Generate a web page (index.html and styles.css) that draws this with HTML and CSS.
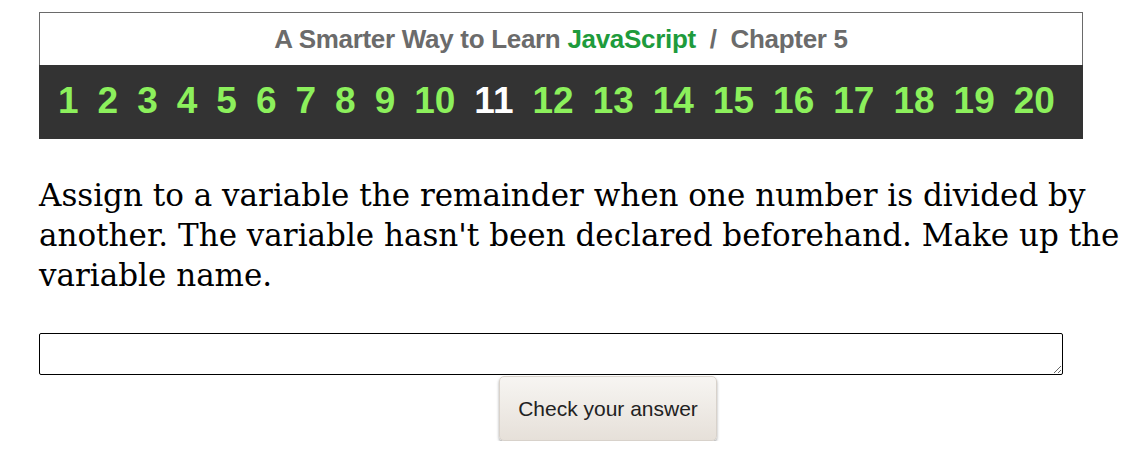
FILE: index.html
```html
<!DOCTYPE html>
<html>
<head>
<meta charset="utf-8">
<link rel="stylesheet" href="styles.css">
</head>
<body>
<div class="page">
  <div class="banner">
    <div class="title"><span>A Smarter Way to Learn <span class="js">JavaScript</span>&nbsp; / &nbsp;Chapter 5</span></div>
    <div class="nums">
      <span>1</span><span>2</span><span>3</span><span>4</span><span>5</span><span>6</span><span>7</span><span>8</span><span>9</span><span>10</span><span class="cur">11</span><span>12</span><span>13</span><span>14</span><span>15</span><span>16</span><span>17</span><span>18</span><span>19</span><span>20</span>
    </div>
  </div>
  <p class="prompt">Assign to a variable the remainder when one number is divided by another. The variable hasn't been declared beforehand. Make up the variable name.</p>
  <textarea class="answer"></textarea>
  <button class="check">Check your answer</button>
</div>
</body>
</html>
```
FILE: styles.css
```css
html, body {
  margin: 0;
  padding: 0;
  background: #fff;
}
.page {
  padding: 12px 6px 0 39px;
  display: flex;
  flex-direction: column;
  align-items: flex-start;
}
.banner {
  width: 1044px;
  display: flex;
  flex-direction: column;
}
.title {
  height: 51px;
  border: 1px solid #6a6a6a;
  border-bottom: none;
  background: #fff;
  display: flex;
  align-items: center;
  justify-content: center;
  font-family: "Liberation Sans", Arial, sans-serif;
  font-weight: bold;
  font-size: 26px;
  color: #6b6b6b;
  letter-spacing: -0.3px;
  padding-top: 1px;
}
.title .js {
  color: #1e9b3c;
}
.nums {
  height: 72px;
  background: #333333;
  display: flex;
  justify-content: space-between;
  align-items: center;
  padding: 0 28px 2px 19px;
  font-family: "Liberation Sans", Arial, sans-serif;
  font-weight: bold;
  font-size: 37px;
  color: #8cf05c;
}
.nums .cur {
  color: #ffffff;
}
.prompt {
  margin: 36px 0 0 0;
  font-family: "DejaVu Serif", Georgia, serif;
  font-size: 31px;
  line-height: 40px;
  color: #000;
}
.answer {
  margin-top: 38px;
  width: 1024px;
  height: 42px;
  box-sizing: border-box;
  border: 1px solid #000;
  border-radius: 2px;
  padding: 2px;
  font-size: 14px;
}
.check {
  margin: 1px 0 0 460px;
  width: 218px;
  height: 65px;
  border: 1px solid #d8d2cb;
  border-radius: 5px;
  background: linear-gradient(#f7f5f2, #e6e0d9);
  box-shadow: 0 2px 3px rgba(0,0,0,0.35);
  font-family: "Liberation Sans", Arial, sans-serif;
  font-size: 21px;
  color: #222;
  cursor: pointer;
}
```
